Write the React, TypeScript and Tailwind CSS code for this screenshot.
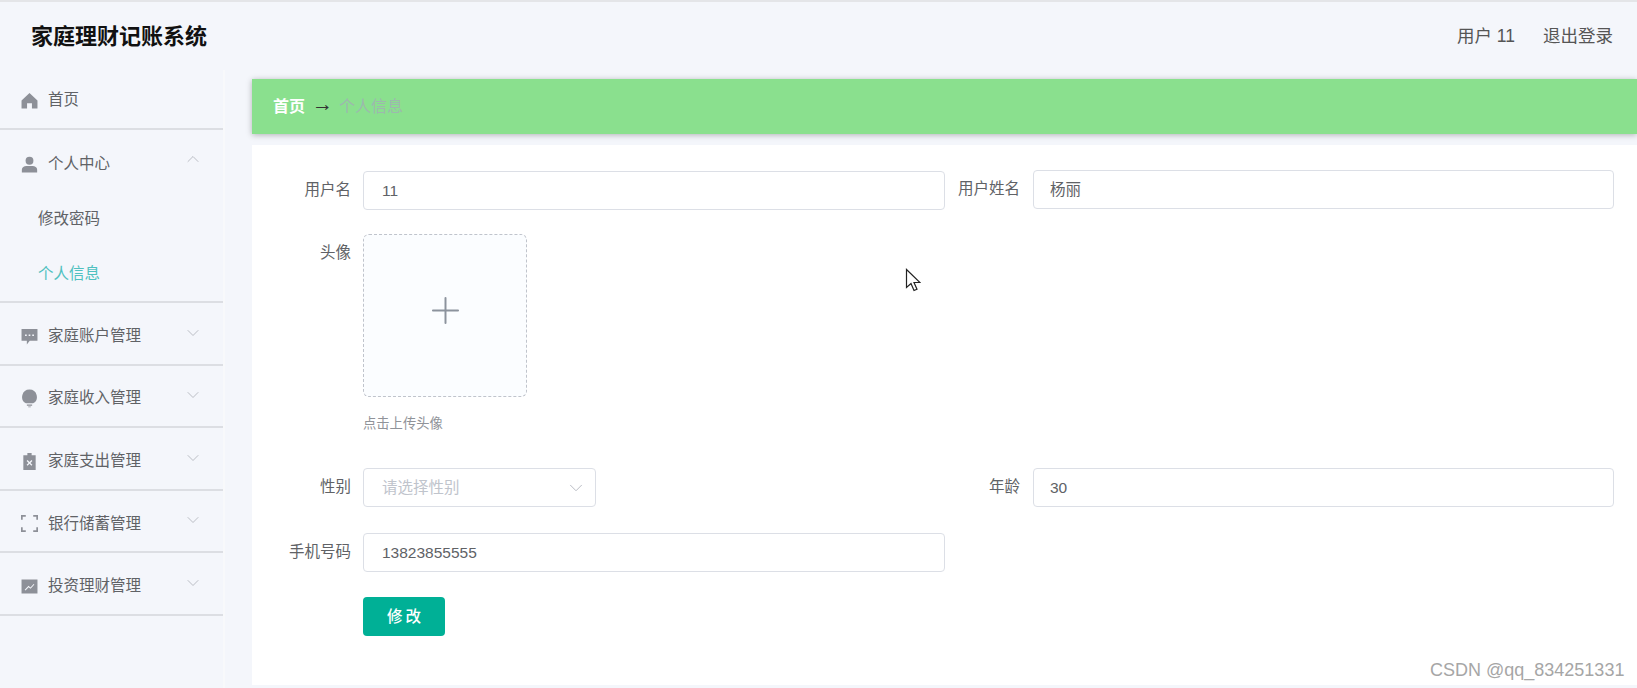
import { ChevronDown, ChevronUp, Plus } from 'lucide-react';
import type { ReactNode } from 'react';

const font = "font-['Liberation_Sans','Noto_Sans_CJK_SC',sans-serif]";

const HomeIcon = () => (
  <svg viewBox="0 0 16 16" className="h-[17px] w-[17px] text-[#8d9098]" fill="currentColor">
    <path d="M8 1 .5 8v7.500h5.200V10.500h4.600v5h5.200V8z" />
  </svg>
);

const UserIcon = () => (
  <svg viewBox="0 0 16 16" className="h-[17px] w-[17px] text-[#8d9098]" fill="currentColor">
    <circle cx="8" cy="4.500" r="3.700" />
    <path d="M.8 15.500v-2.500c0-2.300 2.200-3.500 4.200-3.500h6c2 0 4.200 1.200 4.200 3.500v2.500z" />
  </svg>
);

const ChatIcon = () => (
  <svg viewBox="0 0 16 16" className="h-[17px] w-[17px] text-[#8d9098]" fill="currentColor">
    <path fillRule="evenodd" d="M.5 1h15v11H8.200L5.500 15.500V12H.5zM3.800 6v1.600h1.600V6zm3.400 0v1.600h1.600V6zm3.400 0v1.600h1.600V6z" />
  </svg>
);

const BulbIcon = () => (
  <svg viewBox="0 0 16 18" className="h-[19px] w-[17px] text-[#8d9098]" fill="currentColor">
    <path d="M8 .5a7 7 0 0 0-3.400 13.100h6.800A7 7 0 0 0 8 .5z" />
    <path d="M5.500 14.800h5v1h-5zM6.800 16.500h2.400v.8H6.800z" />
  </svg>
);

const ClipboardIcon = () => (
  <svg viewBox="0 0 16 16" className="h-[17px] w-[17px] text-[#8d9098]" fill="currentColor">
    <path fillRule="evenodd" d="M6 0h4v2h3.800v14H2.200V2H6zM6.200 6.600l-.9.9L7.100 9.300l-1.800 1.800.9.9L8 10.200l1.800 1.800.9-.9-1.800-1.800 1.800-1.800-.9-.9L8 8.400z" />
  </svg>
);

const CornersIcon = () => (
  <svg viewBox="0 0 16 16" className="h-[17px] w-[17px] text-[#8d9098]" fill="none" stroke="currentColor" strokeWidth="1.600">
    <path d="M.8 4.500V.8h3.700M11.500.8h3.700v3.700M15.200 11.500v3.700h-3.700M4.500 15.200H.8v-3.700" />
  </svg>
);

const ChartIcon = () => (
  <svg viewBox="0 0 16 16" className="h-[17px] w-[17px] text-[#8d9098]" fill="currentColor">
    <path fillRule="evenodd" d="M.5 1.500h15v13H.5zM3.500 11l.7.7 3-3 1.800 1.500 3.600-4-.7-.6-3 3.300-1.800-1.500z" />
  </svg>
);

type NavItemProps = { icon: ReactNode; label: string; open?: boolean; arrow?: boolean; shift?: string };

const NavItem = ({ icon, label, open, arrow = true, shift = 'pt-0' }: NavItemProps) => (
  <div className={`flex h-[62px] items-center pl-[21px] pr-[20px] text-[15.5px] text-[#606266] ${shift}`}>
    <span className="mr-[10px] flex w-[17px] justify-center pt-[1px]">{icon}</span>
    <span className="flex-1">{label}</span>
    {arrow &&
      (open ? (
        <ChevronUp className="mb-[10px] h-[20px] w-[20px] text-[#a8abb2]" strokeWidth={0.9} />
      ) : (
        <ChevronDown className="mb-[6px] h-[20px] w-[20px] text-[#a8abb2]" strokeWidth={0.9} />
      ))}
  </div>
);

const Sidebar = () => (
  <aside className="w-[225px] shrink-0 border-r-2 border-[#f8f9fb]">
    <div className="h-[61px] w-[223px] border-b-2 border-[#dcdee3]">
      <div className="-mt-[1px]">
        <NavItem icon={<HomeIcon />} label="首页" arrow={false} />
      </div>
    </div>
    <div className="w-[223px] border-b-2 border-[#dcdee3]">
      <NavItem icon={<UserIcon />} label="个人中心" open shift="pt-[6px]" />
      <div className="flex h-[54px] items-center pl-[38px] text-[15.5px] text-[#606266]">修改密码</div>
      <div className="flex h-[55px] items-center pl-[38px] text-[15.5px] text-[#4fc1c0]">个人信息</div>
    </div>
    {[
      { icon: <ChatIcon />, label: '家庭账户管理' },
      { icon: <BulbIcon />, label: '家庭收入管理' },
      { icon: <ClipboardIcon />, label: '家庭支出管理' },
      { icon: <CornersIcon />, label: '银行储蓄管理' },
      { icon: <ChartIcon />, label: '投资理财管理' },
    ].map((item) => (
      <div key={item.label} className="h-[62.6px] w-[223px] border-b-2 border-[#dcdee3]">
        <NavItem icon={item.icon} label={item.label} shift="pt-[3px]" />
      </div>
    ))}
  </aside>
);

const Field = ({ value, placeholder, arrow, inset = 'pl-[18px]' }: { value?: string; placeholder?: string; arrow?: boolean; inset?: string }) => (
  <div className={`flex h-[39px] w-full items-center justify-between rounded border border-[#dcdfe6] bg-white pr-[8px] text-[15.5px] text-[#606266] ${inset}`}>
    {value ?? <span className="text-[#c0c4cc]">{placeholder}</span>}
    {arrow && <ChevronDown className="h-[22px] w-[22px] text-[#b4b7be]" strokeWidth={1} />}
  </div>
);

const Label = ({ children, width = 'w-[111px]', inset = 'pr-[12px]' }: { children: ReactNode; width?: string; inset?: string }) => (
  <div className={`${width} shrink-0 ${inset} text-right text-[15.5px] leading-[37px] text-[#606266]`}>{children}</div>
);

const App = () => (
  <div className={`relative flex h-[688px] w-[1637px] flex-col overflow-hidden border-t-2 border-[#e4e5e8] bg-[#f4f6fb] ${font}`}>
    <header className="flex h-[68px] shrink-0 items-center justify-between pl-[31px] pr-[24px]">
      <h1 className="text-[22px] font-bold text-[#111]">家庭理财记账系统</h1>
      <div className="flex gap-[28px] text-[17.5px] text-[#555]">
        <span>用户 11</span>
        <span>退出登录</span>
      </div>
    </header>

    <div className="flex min-h-0 flex-1">
      <Sidebar />
      <main className="flex-1 pl-[27px] pt-[9px]">
        <div className="flex h-[55px] items-center gap-[9px] bg-[#8ae08e] pl-[21px] text-[16px] shadow-[0_1px_6px_rgba(0,0,0,0.28)]">
          <span className="font-bold text-white">首页</span>
          <span className="-ml-[2px] -mr-[3px] -mt-[7px] text-[21px] leading-none text-[#333]">→</span>
          <span className="text-[#9db8ae]">个人信息</span>
        </div>

        <div className="mt-[11px] h-[540px] bg-white pt-[26px]">
          <div className="flex pr-[23px]">
            <div className="flex w-[693px]">
              <Label>用户名</Label>
              <Field value="11" />
            </div>
            <div className="-mt-px flex flex-1">
              <Label width="w-[88px]" inset="pr-[13px]">用户姓名</Label>
              <Field value="杨丽" inset="pl-[16px]" />
            </div>
          </div>

          <div className="mt-[24px] flex">
            <Label>头像</Label>
            <div>
              <div className="flex h-[163px] w-[164px] items-center justify-center rounded-md border border-dashed border-[#c0c4cc] bg-[#fbfdff]">
                <Plus className="mb-[10px] h-[43px] w-[43px] text-[#8c939d]" strokeWidth={1.1} />
              </div>
              <p className="mt-[17px] text-[13.3px] leading-[20px] text-[#909399]">点击上传头像</p>
            </div>
          </div>

          <div className="mt-[34px] flex pr-[23px]">
            <div className="flex w-[693px]">
              <Label>性别</Label>
              <div className="w-[233px]">
                <Field placeholder="请选择性别" arrow />
              </div>
            </div>
            <div className="flex flex-1">
              <Label width="w-[88px]" inset="pr-[13px]">年龄</Label>
              <Field value="30" inset="pl-[16px]" />
            </div>
          </div>

          <div className="mt-[26px] flex w-[693px]">
            <Label>手机号码</Label>
            <Field value="13823855555" />
          </div>

          <div className="mt-[25px] pl-[111px]">
            <button className="h-[39px] w-[82px] rounded bg-[#00b096] pl-[3px] text-[15.5px] font-medium tracking-[3px] text-white">修改</button>
          </div>
        </div>
      </main>
    </div>

    {/* screen capture leftovers, both sit on top of the page */}
    <svg viewBox="0 0 16 25" className="absolute left-[905px] top-[266px] h-[25px] w-[16px]" fill="#fff" stroke="#222" strokeWidth="1.2">
      <path d="M1.500 1.500v18l4.500-4 3 7 3-1.300-3-6.700h6z" />
    </svg>
    <span className="absolute left-[1430px] top-[655px] font-['Liberation_Sans',sans-serif] text-[18px] text-[#a6a6a6]">CSDN @qq_834251331</span>
  </div>
);

export default App;
